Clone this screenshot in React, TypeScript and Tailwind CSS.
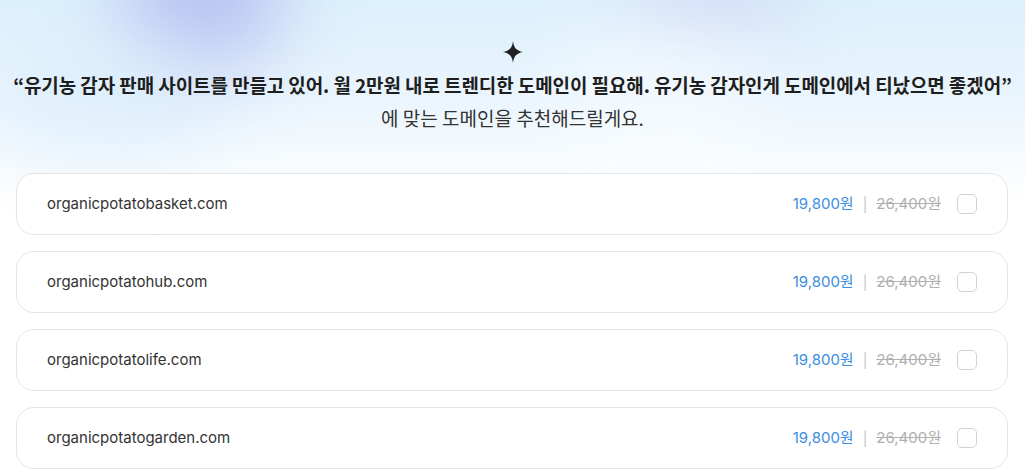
import React from "react";

const domains = [
  "organicpotatobasket.com",
  "organicpotatohub.com",
  "organicpotatolife.com",
  "organicpotatogarden.com",
];

function Sparkle() {
  return (
    <svg width="20" height="22" viewBox="0 0 20 22" aria-hidden="true">
      <path
        d="M10 0 C10.8 6.5 13 9.6 20 11 C13 12.4 10.8 15.5 10 22 C9.2 15.5 7 12.4 0 11 C7 9.6 9.2 6.5 10 0 Z"
        fill="#222"
      />
    </svg>
  );
}

export default function App() {
  return (
    <div
      className="relative w-[1025px] h-[475px] overflow-hidden bg-white"
      style={{ fontFamily: "Inter, 'Noto Sans CJK KR', sans-serif" }}
    >
      <div className="absolute inset-x-0 top-0 h-[200px] bg-gradient-to-b from-[#dcf0fc] via-[#eaf5fd] to-white" />
      <div className="absolute left-[120px] top-[-80px] w-[160px] h-[150px] rounded-full bg-[#aeb5ee] opacity-80 blur-[40px]" />
      <div className="absolute left-[630px] top-[-70px] w-[160px] h-[110px] rounded-full bg-[#ccd2f4] opacity-70 blur-[40px]" />
      <div className="absolute left-[560px] top-[30px] w-[200px] h-[120px] rounded-full bg-white opacity-50 blur-[40px]" />
      <div className="absolute left-[0px] top-[40px] w-[220px] h-[120px] rounded-full bg-[#d8ecfb] opacity-60 blur-[40px]" />

      <div className="relative flex flex-col items-center pt-[41px]">
        <Sparkle />
        <div
          className="mt-[9px] text-[19px] leading-[26px] font-bold text-[#1e1e1e] tracking-[-0.1px] whitespace-nowrap"
          style={{ fontFamily: "'Noto Sans CJK KR', sans-serif" }}
        >
          “유기농 감자 판매 사이트를 만들고 있어. 월 2만원 내로 트렌디한 도메인이 필요해. 유기농 감자인게 도메인에서 티났으면 좋겠어”
        </div>
        <div
          className="mt-[7px] text-[19px] leading-[26px] text-[#333]"
          style={{ fontFamily: "'Noto Sans CJK KR', sans-serif" }}
        >
          에 맞는 도메인을 추천해드릴게요.
        </div>
      </div>

      <div className="relative flex flex-col gap-[16px] pl-[16px] pr-[17px] mt-[42px]">
        {domains.map((d) => (
          <div
            key={d}
            className="flex items-center h-[62px] rounded-[18px] border border-[#e3e5e8] bg-white pl-[30px] pr-[30px]"
          >
            <span className="text-[15px] text-[#333]">{d}</span>
            <div className="ml-auto flex items-center text-[15px]">
              <span className="text-[#3a8ee0]">19,800원</span>
              <span className="mx-[9px] text-[#c4c4c4] text-[14px]">|</span>
              <span className="text-[#b0b0b0] line-through">26,400원</span>
              <span className="ml-[16px] w-[20px] h-[20px] rounded-[5px] border border-[#cfd3d9] bg-white" />
            </div>
          </div>
        ))}
      </div>
    </div>
  );
}
